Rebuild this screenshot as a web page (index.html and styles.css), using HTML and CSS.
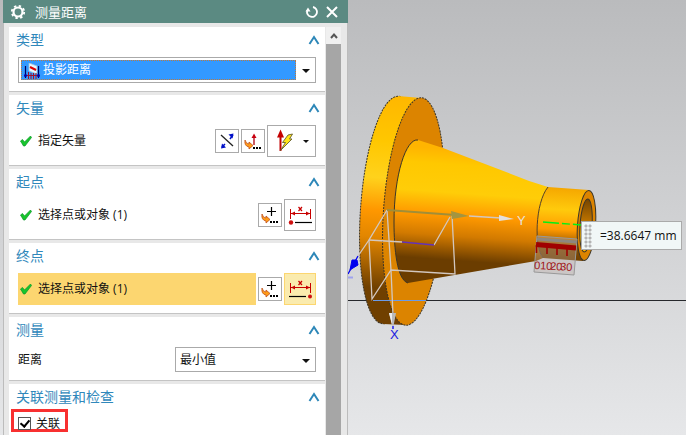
FILE: index.html
```
<!DOCTYPE html>
<html lang="zh-CN">
<head>
  <meta charset="UTF-8" />
  <meta name="viewport" content="width=device-width, initial-scale=1.0" />
  <title>测量距离</title>
  <link rel="stylesheet" href="styles.css">
</head>
<body>
  <!-- shared icons -->
  <svg class="sprite" aria-hidden="true">
    <symbol id="chevron" viewBox="0 0 12 10"><path d="M1.5 9 L6 2 L10.5 9" fill="none" stroke="#2d87b8" stroke-width="2"/></symbol>
    <symbol id="arrow" viewBox="0 0 8 4"><path d="M0 0 H8 L4 4 Z" fill="#111"/></symbol>
    <symbol id="check" viewBox="0 0 12 12"><path d="M0.5 6 L2.5 4.5 L4.5 7 L10.5 1 L11.5 2.5 L5 11 H3.5 Z" fill="#17c52c" stroke="#0a962a" stroke-width=".7"/></symbol>
    <symbol id="pick" viewBox="0 0 22 22">
      <path d="M3 10 Q4 14 7 14 V12 L11 15.5 L7 19 V17 Q2 16 3 10Z" fill="#ff9c18" stroke="#c0501c" stroke-width=".8"/>
      <path d="M11 17h2v2h-2zM14 17h2v2h-2zM17 17h2v2h-2z" fill="#000"/>
    </symbol>
    <symbol id="dim" viewBox="0 0 24 24">
      <path d="M2.5 6 V16 M22.5 6 V16 M3 10.5 H22" stroke="#c80000" fill="none"/>
      <path d="M3 10.5 L7 8.5 V12.5Z M22 10.5 L18 8.5 V12.5Z" fill="#c80000"/>
      <path d="M10.5 4 L14 8 M14 4 L10.5 8" stroke="#c80000" stroke-width="1.2"/>
    </symbol>
  </svg>

  <div class="window">
    <section class="dialog">
      <header class="titlebar">
        <svg width="16" height="16" viewBox="0 0 16 16">
          <circle cx="8" cy="8" r="4.5" fill="none" stroke="#fff" stroke-width="2.2"/>
          <circle cx="8" cy="8" r="6.2" fill="none" stroke="#fff" stroke-width="1.8" stroke-dasharray="2.4 2.47"/>
        </svg>
        <h1>测量距离</h1>
        <button type="button" aria-label="重置">
          <svg width="14" height="14" viewBox="0 0 14 14"><path d="M8 2 A5 5 0 1 1 2.2 5.5" fill="none" stroke="#fff" stroke-width="1.8"/><path d="M0.5 6.5 L3 2.5 L5.5 6.5Z" fill="#fff"/></svg>
        </button>
        <button type="button" aria-label="关闭">
          <svg width="14" height="14" viewBox="0 0 14 14"><path d="M2 2 L12 12 M12 2 L2 12" stroke="#fff" stroke-width="2"/></svg>
        </button>
      </header>

      <div class="dialog-body">
        <div class="groups">
          <section class="group">
            <h2><label for="type">类型</label><svg class="chevron"><use href="#chevron"/></svg></h2>
            <div class="combo combo-active">
              <svg class="combo-icon" viewBox="0 0 16 16">
                <path d="M5 0 L13 3 V11 L5 8Z" fill="#e8f6ff" stroke="#9fc4d8" stroke-width=".8"/>
                <path d="M6 4 L12 7" stroke="#d00" stroke-width="2"/>
                <path d="M1.500 3 V15 M14.500 3 V15" stroke="#000060" stroke-width="1.200"/>
                <path d="M3 12.500 H13 M4.500 9 V16 M7 10 V16 M9.500 10 V16 M12 10 V16" stroke="#a0102c"/>
                <circle cx="1.500" cy="12.500" r="1.500" fill="#0000a8"/><circle cx="14.500" cy="12.500" r="1.500" fill="#0000a8"/>
              </svg>
              <select id="type"><option>投影距离</option></select>
              <svg class="combo-arrow"><use href="#arrow"/></svg>
            </div>
          </section>

          <section class="group">
            <h2>矢量<svg class="chevron"><use href="#chevron"/></svg></h2>
            <div class="row">
              <div class="step"><svg class="check"><use href="#check"/></svg>指定矢量</div>
              <button type="button" class="tool" aria-label="反向">
                <svg width="22" height="22" viewBox="0 0 22 22">
                  <path d="M5 5 L17 16" stroke="#222" stroke-width="1.3"/>
                  <path d="M6 17 L9 14 M14 9 L17 5" stroke="#0010c8" stroke-width="1.5"/>
                  <path d="M5 18.5 L6 13.5 L10 17.5Z M17.5 3.5 L16.5 8.5 L12.5 4.5Z" fill="#0010c8"/>
                </svg>
              </button>
              <button type="button" class="tool" aria-label="矢量对话框">
                <svg width="22" height="22" viewBox="0 0 22 22"><use href="#pick"/><path d="M12 15 V6" stroke="#b00010" stroke-width="1.3"/><path d="M9.5 8 L12 3.5 L14.5 8Z" fill="#c80010"/></svg>
              </button>
              <button type="button" class="tool tool-wide" aria-label="推断矢量">
                <svg width="22" height="26" viewBox="0 0 22 26">
                  <path d="M6.5 8 V23" stroke="#c00000" stroke-width="2"/><path d="M3 9.5 L6.5 1.5 L10 9.5Z" fill="#c40000"/>
                  <path d="M14 7 L18.5 6 L15.5 11 H18 L6.5 22.5 L11.5 14.5 H8.5Z" fill="#ffe617" stroke="#665f2c" stroke-width=".9"/>
                </svg>
                <svg class="small-arrow"><use href="#arrow"/></svg>
              </button>
            </div>
          </section>

          <section class="group">
            <h2>起点<svg class="chevron"><use href="#chevron"/></svg></h2>
            <div class="row">
              <div class="step"><svg class="check"><use href="#check"/></svg>选择点或对象 (1)</div>
              <button type="button" class="tool" aria-label="点对话框">
                <svg width="22" height="22" viewBox="0 0 22 22"><use href="#pick"/><path d="M8 7.5 H17 M12.5 3 V12" stroke="#000" stroke-width="1.2"/></svg>
              </button>
              <button type="button" class="tool tool-big" aria-label="起点">
                <svg width="24" height="24" viewBox="0 0 24 24"><use href="#dim"/><path d="M7 19.5 H24" stroke="#000" stroke-width="1.2"/><circle cx="3" cy="19.5" r="2.2" fill="#cf1010"/></svg>
              </button>
            </div>
          </section>

          <section class="group">
            <h2>终点<svg class="chevron"><use href="#chevron"/></svg></h2>
            <div class="row">
              <div class="step step-active"><svg class="check"><use href="#check"/></svg>选择点或对象 (1)</div>
              <button type="button" class="tool" aria-label="点对话框">
                <svg width="22" height="22" viewBox="0 0 22 22"><use href="#pick"/><path d="M8 7.5 H17 M12.5 3 V12" stroke="#000" stroke-width="1.2"/></svg>
              </button>
              <button type="button" class="tool tool-big tool-active" aria-label="终点">
                <svg width="24" height="24" viewBox="0 0 24 24"><use href="#dim"/><path d="M1 19.5 H18" stroke="#000" stroke-width="1.2"/><circle cx="22" cy="19.5" r="2" fill="#cf1010"/></svg>
              </button>
            </div>
          </section>

          <section class="group">
            <h2>测量<svg class="chevron"><use href="#chevron"/></svg></h2>
            <div class="row">
              <label class="name" for="distance">距离</label>
              <div class="combo combo-short">
                <select id="distance"><option>最小值</option></select>
                <svg class="combo-arrow"><use href="#arrow"/></svg>
              </div>
            </div>
          </section>

          <section class="group">
            <h2>关联测量和检查<svg class="chevron"><use href="#chevron"/></svg></h2>
            <label class="tick"><input type="checkbox" checked>关联</label>
          </section>
        </div>
        <div class="scrollbar">
          <button type="button" aria-label="向上滚动"><svg width="8" height="8" viewBox="0 0 8 8"><path d="M1 6 L4 2.5 L7 6" fill="none" stroke="#555" stroke-width="2"/></svg></button>
        </div>
      </div>
    </section>

    <main class="viewport">
      <svg class="scene" width="338" height="435" viewBox="348 0 338 435">
        <defs>
          <linearGradient id="flange" gradientUnits="userSpaceOnUse" x1="0" y1="96" x2="0" y2="325">
            <stop offset="0" stop-color="#ffb700"/><stop offset=".2" stop-color="#ffc700"/><stop offset=".36" stop-color="#ffd21c"/>
            <stop offset=".5" stop-color="#ff9800"/><stop offset=".62" stop-color="#e28600"/><stop offset=".84" stop-color="#704000"/><stop offset="1" stop-color="#704000"/>
          </linearGradient>
          <linearGradient id="cone" gradientUnits="userSpaceOnUse" x1="464" y1="150" x2="455" y2="277">
            <stop offset="0" stop-color="#ffb400"/><stop offset=".12" stop-color="#ffc800"/><stop offset=".34" stop-color="#ffcd08"/>
            <stop offset=".52" stop-color="#ff9900"/><stop offset=".68" stop-color="#d27a00"/><stop offset=".87" stop-color="#6b3d00"/><stop offset="1" stop-color="#6b3d00"/>
          </linearGradient>
          <linearGradient id="neck" gradientUnits="userSpaceOnUse" x1="564" y1="188" x2="560" y2="260">
            <stop offset="0" stop-color="#f5a700"/><stop offset=".3" stop-color="#ffca0c"/><stop offset=".58" stop-color="#ff9900"/><stop offset=".82" stop-color="#854d00"/><stop offset="1" stop-color="#704000"/>
          </linearGradient>
          <linearGradient id="bore" x1="0" y1="0" x2="0" y2="1">
            <stop offset="0" stop-color="#754400"/><stop offset=".4" stop-color="#b97000"/><stop offset=".8" stop-color="#ffc400"/><stop offset="1" stop-color="#ffb400"/>
          </linearGradient>
        </defs>

        <path d="M348 300.5 H686" stroke="#26282c"/>

        <!-- flange -->
        <g stroke="#3b3528">
          <ellipse cx="390.5" cy="210" rx="30" ry="114" transform="rotate(4 390.5 210)" fill="url(#flange)" stroke-dasharray="2 1"/>
          <path d="M398 96 L421 98 L406 325 L383 324Z" fill="url(#flange)" stroke="none"/>
          <ellipse cx="413.5" cy="211.5" rx="30" ry="114" transform="rotate(4 413.5 211.5)" fill="#dc8400" stroke-dasharray="2 1"/>
        </g>

        <!-- cone and neck -->
        <path d="M418 140 L443 148 L511 174 Q530 182 548 187 C535 203 534 248 543 258 L536 261 L408 283 C397 280 394 249 394 222 C394 175 406 138 418 140Z" fill="url(#cone)"/>
        <path d="M418 140 C406 138 394 175 394 222 C394 249 397 280 408 283" fill="none" stroke="#3b3528"/>
        <path d="M548 187 L589 190 L583 261 L543 258 C534 248 535 203 548 187Z" fill="url(#neck)"/>
        <path d="M548 187 C535 203 534 248 543 258" fill="none" stroke="#574020"/>
        <ellipse cx="586.5" cy="225.5" rx="9" ry="35" transform="rotate(4 586.5 225.5)" fill="#dc8400" stroke="#3b3528"/>
        <ellipse cx="586" cy="225.5" rx="6" ry="26.5" transform="rotate(4 586 225.5)" fill="url(#bore)" stroke="#3b3528"/>

        <path d="M373 300.5 H426" stroke="#6b9be8"/>

        <!-- coordinate frame -->
        <g fill="none" stroke="#d2c7bf" stroke-width="1.3">
          <path d="M387 210 L369 240 L372 299 L391 270 L455 274 L452 215"/>
          <path d="M369 240 L402 242 M434 245 L450 217"/>
          <path d="M387 210 L391 270 L393 315 M469 216 L501 218 M369 240 L358 256"/>
        </g>
        <path d="M402 242 L434 245" stroke="#6332b8" stroke-width="1.5"/>
        <path d="M387 210 L455 215" stroke="#a08e38" stroke-width="2"/>
        <path d="M451 211 L469 216 L452 219Z" fill="#a39540"/>
        <path d="M499 215 L514 219 L499 221Z" fill="#e3dfdb"/>
        <path d="M389 313 H396 L393.5 326 H392.5Z" fill="#b9b9b9"/>
        <path d="M389 313 H392 V325Z" fill="#ececec"/>
        <path d="M393 326 V329 M358 256 L348 274" stroke="#0000ee" stroke-width="1.3"/>
        <path d="M352 260 L357 260 L358 265 L353 268 L350 270Z" fill="#0000ee" stroke="#0000ee"/>
        <path d="M348 277.5 H353" stroke="#9ea2ee" stroke-width="2"/>
        <text class="axis axis-y" x="517" y="225">Y</text>
        <text class="axis axis-x" x="390" y="339">X</text>

        <!-- ruler on the neck -->
        <path d="M537 236 L577 239 L574 275 L534 272Z" fill="#b9aaa4" fill-opacity=".35" stroke="#999"/>
        <path d="M537 239 L577 242" stroke="#8d8780" stroke-width="3"/>
        <path d="M536 244.5 L576 248" stroke="#a00000" stroke-width="5"/>
        <path d="M536.5 245 V253 M547 246 V254 M557 247 V255 M567 248 V256" stroke="#a00000" stroke-width="1.6"/>
        <text class="ruler" x="534" y="269" transform="rotate(3 534 269)">0</text>
        <text class="ruler" x="540" y="269" transform="rotate(3 534 269)">10</text>
        <text class="ruler" x="550" y="269" transform="rotate(3 534 269)">20</text>
        <text class="ruler" x="560" y="269" transform="rotate(3 534 269)">30</text>
        <path d="M543 222 L581 225" stroke="#00f018" stroke-width="1.5" stroke-dasharray="16 3 8 3"/>
      </svg>
      <div class="readout"><span class="grip"></span>=38.6647 mm</div>
    </main>
  </div>
</body>
</html>
```
FILE: styles.css
```
* { box-sizing: border-box; }
body { margin: 0; font-family: "Open Sans", "Noto Sans CJK SC", sans-serif; font-size: 12px; line-height: 16px; color: #111; }
button { margin: 0; padding: 0; border: 0; background: none; font: inherit; cursor: pointer; }
svg { display: block; flex: none; }
.sprite { position: absolute; width: 0; height: 0; }

.window { display: flex; height: 100vh; overflow: hidden; padding-left: 3px; background: linear-gradient(#babbbd, #e6e7e9); }

/* dialog */
.dialog { flex: 0 0 345px; display: flex; flex-direction: column; background: #e8e8e8; border: solid #bcbcbc; border-width: 0 1px; }
.titlebar { flex: none; display: flex; align-items: center; gap: 6px; height: 23px; margin: 0 -1px; padding: 1px 9px 0 7px; background: #5b8a82; color: #fff; }
.titlebar h1 { flex: 1; margin: 0 0 0 3px; font-size: 13px; font-weight: 400; line-height: 20px; }
.dialog-body { flex: 1; min-height: 0; display: flex; gap: 1px; padding: 4px 6px 0 5px; }
.groups { flex: 1; display: flex; flex-direction: column; gap: 3px; overflow: hidden; }

.group { flex: none; padding: 0 9px 8px; background: #fff; border-bottom: 1px solid #c4c4c4; }
.group h2 { display: flex; align-items: center; justify-content: space-between; height: 26px; margin: 0 -4px 4px -2px; font-size: 14px; font-weight: 400; color: #3088bb; }
.chevron { width: 12px; height: 10px; }
.row { display: flex; align-items: center; gap: 2px; }
.step { flex: 1; display: flex; align-items: center; gap: 6px; height: 32px; padding-left: 2px; }
.step-active { background: #fcd670; }
.check { width: 12px; height: 12px; }
.name { flex: 1; }

.tool { display: flex; align-items: center; justify-content: center; width: 24px; height: 24px; border: 1px solid #aaa; background: #fff; }
.tool-big { width: 32px; height: 32px; }
.tool-wide { width: 49px; height: 32px; gap: 7px; }
.tool-active { background: #faebae; border-color: #fcd670; }
.small-arrow { width: 6px; height: 3px; }

.combo { position: relative; height: 26px; padding: 2px 19px 2px 2px; border: 1px solid #aaa; background: #fff; }
.combo select { width: 100%; height: 20px; padding: 0 2px; border: 0; appearance: none; background: #fff; color: #111; font: inherit; }
.combo-active select { padding-left: 21px; border: 1px dotted #c0793a; background: #3399ff; color: #fff; }
.combo-short { width: 141px; height: 25px; }
.combo-icon { position: absolute; left: 5px; top: 5px; width: 16px; height: 16px; }
.combo-arrow { position: absolute; right: 5px; top: 11px; width: 8px; height: 4px; }

.tick { display: inline-flex; align-items: center; gap: 5px; height: 23px; margin: -5px 0 0 -7px; padding: 6px 5px 0 4px; border: 3px solid #f83030; }
.tick input { appearance: none; width: 13px; height: 13px; margin: 0; border: 1px solid #555; background: #fff; }
.tick input:checked::before { content: ""; display: block; width: 4px; height: 7px; margin: 0 0 0 3px; border: solid #000; border-width: 0 2px 2px 0; transform: rotate(40deg); }

.scrollbar { flex: 0 0 15px; background: #a6a6a6; }
.scrollbar button { display: flex; align-items: center; justify-content: center; width: 100%; height: 17px; background: #f0f0f0; }

/* graphics area */
.viewport { flex: 1; position: relative; min-width: 0; overflow: hidden; }
.axis { font-family: "Liberation Sans", sans-serif; font-size: 13px; }
.axis-x { fill: #1818e0; }
.axis-y { fill: #e6e2dc; }
.ruler { font-family: "Liberation Sans", sans-serif; font-size: 11px; fill: #a01818; }
.readout { position: absolute; left: 233px; top: 221px; display: flex; align-items: center; gap: 8px; height: 29px; padding: 0 4px 0 2px; border: 1px solid #aaa; background: #f1f7f7; font-size: 12px; white-space: nowrap; }
.grip { width: 8px; height: 24px; background: radial-gradient(circle, #b4b4b4 1px, transparent 2px) 0 0 / 4px 4px; }
```
